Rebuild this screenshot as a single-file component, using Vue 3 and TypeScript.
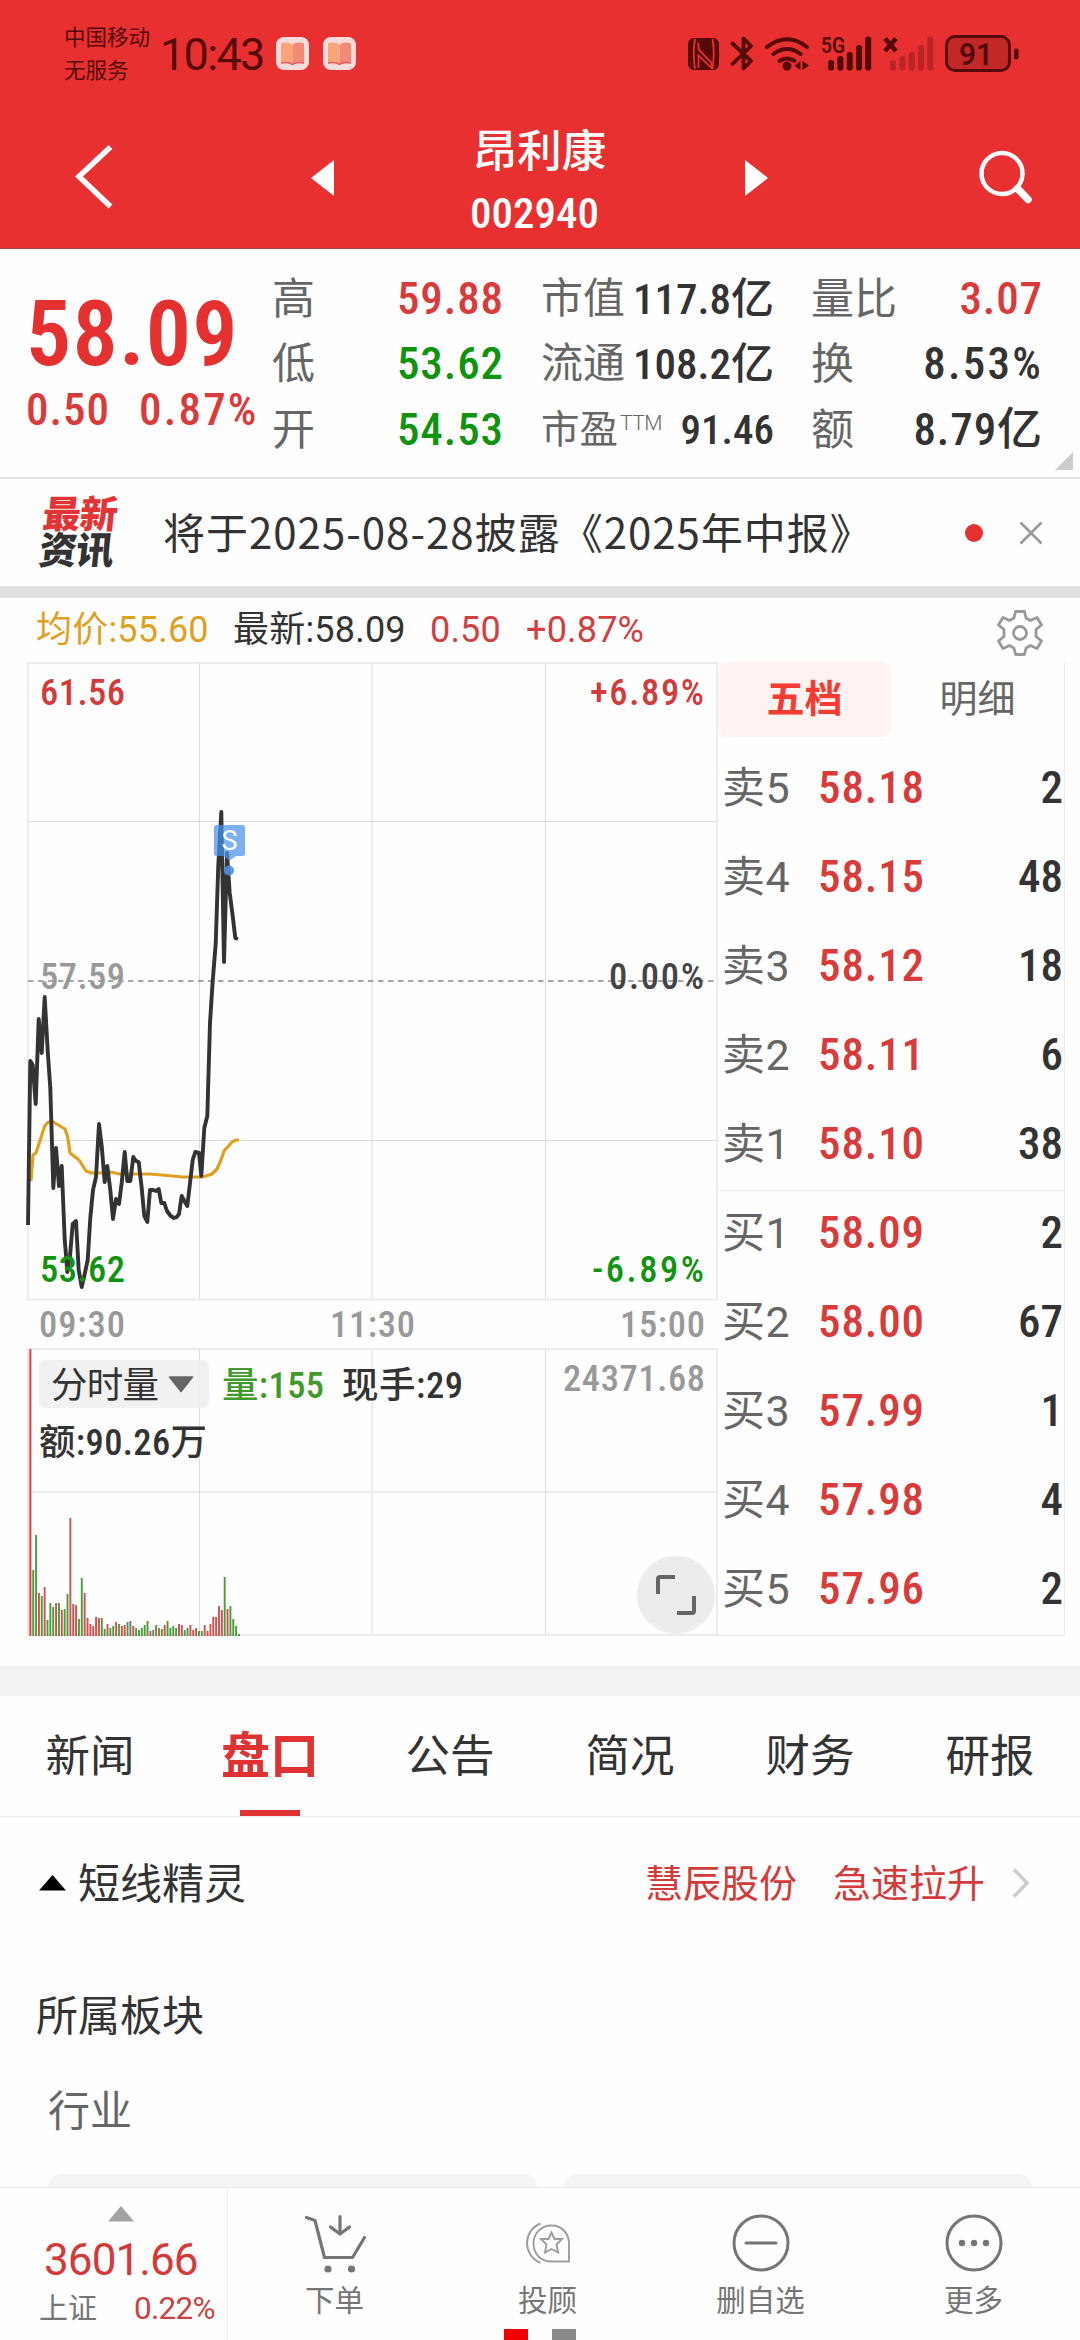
<script setup lang="ts">
type Tone = 'up' | 'down' | 'plain'

interface Stat {
  label: string
  sup?: string
  value: string
  tone: Tone
}

const statColumns: { key: string; items: Stat[] }[] = [
  {
    key: 'range',
    items: [
      { label: '高', value: '59.88', tone: 'up' },
      { label: '低', value: '53.62', tone: 'down' },
      { label: '开', value: '54.53', tone: 'down' },
    ],
  },
  {
    key: 'cap',
    items: [
      { label: '市值', value: '117.8亿', tone: 'plain' },
      { label: '流通', value: '108.2亿', tone: 'plain' },
      { label: '市盈', sup: 'TTM', value: '91.46', tone: 'plain' },
    ],
  },
  {
    key: 'turn',
    items: [
      { label: '量比', value: '3.07', tone: 'up' },
      { label: '换', value: '8.53%', tone: 'plain' },
      { label: '额', value: '8.79亿', tone: 'plain' },
    ],
  },
]

const orders = [
  { label: '卖5', price: '58.18', qty: 2 },
  { label: '卖4', price: '58.15', qty: 48 },
  { label: '卖3', price: '58.12', qty: 18 },
  { label: '卖2', price: '58.11', qty: 6 },
  { label: '卖1', price: '58.10', qty: 38 },
  { label: '买1', price: '58.09', qty: 2 },
  { label: '买2', price: '58.00', qty: 67 },
  { label: '买3', price: '57.99', qty: 1 },
  { label: '买4', price: '57.98', qty: 4 },
  { label: '买5', price: '57.96', qty: 2 },
]

const tabs = ['新闻', '盘口', '公告', '简况', '财务', '研报']
const activeTab = '盘口'

const pricePoints =
  '28,1225 30.3,1061 32.7,1065 35.7,1104 38.7,1019 41.7,1053 44.7,997 47.7,1051 50.3,1088 53.3,1188 56,1148 59,1186 61.7,1166 64.7,1239 67.3,1272 70,1256 72.7,1224 76,1221 78.7,1270 81.7,1287 84.7,1274 87.7,1260 90.3,1218 93,1190 96,1177 99,1124 101.7,1146 104.7,1182 107.3,1166 110.3,1190 113,1219 116,1199 119,1204 121.7,1183 124.7,1152 127.3,1181 130.3,1181 133.3,1157 136,1161 138.7,1162 141.7,1188 144.3,1216 147.3,1222 150,1190 153.3,1190 156,1191 158.7,1189 161.3,1203 164.3,1203 167,1211 170.7,1216 174,1218 176.7,1217 179,1214 181.7,1196 184.3,1201 187.3,1206 190,1183 192.7,1160 195.3,1152 199,1153 201.3,1176 204.3,1128 207.3,1116 210,1023 212.7,981 215.7,944 218.3,865 221.3,812 224,962 227,853 229.7,893 232.7,916 235.3,938 238,939'

const averagePoints =
  '31,1181 33,1155 36,1153 44.7,1126 48.3,1122 53.3,1122 65,1129 67.7,1137 70,1153 79,1160 86,1171 91.7,1173 100,1173 110,1172 120,1174 150,1174 173,1176 182,1177 203,1177 212,1174 217,1169 221,1160 224,1151 232,1142 236,1140 239,1140'

// One entry per minute: r = rising, g = falling, k = unchanged, then the bar height
const volumeSource =
  'r287 g66 g101 r43 g40 r49 g16 g33 g29 r33 g33 r26 g27 g42 r118 r32 r31 g17 g58 r43 r18 r12 r10 r19 r18 g18 g7 r12 g8 g10 r14 g12 r10 r11 g14 k15 r10 g8 g6 g8 g11 g15 r5 k6 g11 r8 g7 r11 g15 g8 g10 g8 r12 r11 g6 g8 r11 r6 r8 g5 g5 r11 r5 r12 r19 r19 r30 r26 g59 r27 g30 g17 g10 g2'

const barColors: Record<string, string> = { r: '#cf5150', g: '#4b9c3b', k: '#777777' }

const volumeBars = volumeSource.split(' ').map((entry, i) => {
  const height = Number(entry.slice(1))
  return { x: 29.4 + i * 2.858, y: 1636 - height, height, color: barColors[entry[0]] }
})

const signalBars = [
  { x: 828, y: 60 },
  { x: 837.4, y: 56 },
  { x: 846.8, y: 52 },
  { x: 856, y: 45 },
  { x: 865.2, y: 36.5 },
]
</script>

<template>
  <div class="screen">
    <header class="top">
      <div class="status">
        <div class="carrier"><span>中国移动</span><span>无服务</span></div>
        <span class="clock">10:43</span>
        <svg v-for="n in 2" :key="n" class="book" width="33" height="33" viewBox="0 0 33 33">
          <rect width="33" height="33" rx="8" fill="#f7dcdc" />
          <path d="M5 6.5C9 5 14 5 16.500 8V27.500C14 25.500 9 25.500 5 26.500Z" fill="#f9a57a" />
          <path d="M28 6.500C24 5 19 5 16.500 8V27.500C19 25.500 24 25.500 28 26.500Z" fill="#f28a76" />
          <path d="M5 26Q13 24.500 16.500 27.500Q20 24.500 28 26" fill="none" stroke="#ea5563" stroke-width="1.500" />
        </svg>
        <svg class="status-icons" width="340" height="44" viewBox="684 32 340 44">
          <g fill="#560909">
            <rect x="688" y="38" width="31" height="32" rx="6" />
            <path d="M695 39C693.500 48 693.500 60 695 69M712.500 39C714 48 714 60 712.500 69" fill="none" stroke="#e83030" stroke-width="1.800" />
            <path d="M695.500 40.500L711.500 57M699.500 51L710 61.500V69M697.500 50V66L712 69" fill="none" stroke="#e83030" stroke-width="0" />
            <path d="M698 43L699 50L711.500 62.500V68L698.500 55.500V68" fill="none" stroke="#e83030" stroke-width="1.800" />
            <path d="M732.500 43.500L751 61L743.500 68.500V38.500L751 46L732.500 64" fill="none" stroke="#560909" stroke-width="3.800" stroke-linejoin="round" stroke-linecap="round" />
            <path d="M767 47Q787 31.500 807 47M773.500 54Q787 44 800.500 54M779.500 61Q787 56 794.500 61" fill="none" stroke="#560909" stroke-width="4" stroke-linecap="round" />
            <circle cx="787" cy="66" r="4.500" />
            <path d="M794.500 66L800.500 61V70ZM809 65.500L802.500 61V70Z" />
            <text x="821" y="53" class="net" textLength="24" lengthAdjust="spacingAndGlyphs">5G</text>
            <rect v-for="bar in signalBars" :key="bar.x" :x="bar.x" :y="bar.y" width="6" :height="70.500 - bar.y" rx="2.800" />
            <path d="M885 38.500L896 51M896 38.500L885 51" stroke="#560909" stroke-width="4.500" />
            <g opacity="0.3">
              <rect v-for="bar in signalBars" :key="bar.x" :x="bar.x + 62" :y="bar.y" width="6" :height="70.500 - bar.y" rx="2.800" />
            </g>
            <rect x="946.500" y="36.500" width="63" height="34" rx="8.500" fill="#c32828" stroke="#560909" stroke-width="3" />
            <rect x="1014" y="48.500" width="4.500" height="11" rx="2" />
            <text x="959" y="65" class="battery" textLength="34" lengthAdjust="spacingAndGlyphs">91</text>
          </g>
        </svg>
      </div>
      <div class="nav">
        <svg width="60" height="80" viewBox="60 134 60 80"><path d="M110.500 145L79 174.500L110.500 204.500" fill="none" stroke="#fff" stroke-width="5.500" /></svg>
        <svg class="prev" width="23" height="36" viewBox="0 0 23 36"><path d="M0 18L23 0V36Z" fill="#fff" /></svg>
        <div class="title"><strong>昂利康</strong><span>002940</span></div>
        <svg class="next" width="23" height="36" viewBox="0 0 23 36"><path d="M23 18L0 0V36Z" fill="#fff" /></svg>
        <svg width="60" height="60" viewBox="974 146 60 60">
          <circle cx="1002" cy="173.500" r="20.500" fill="none" stroke="#fff" stroke-width="4.500" />
          <path d="M1017.500 188.500L1028 199.500" stroke="#fff" stroke-width="7.500" stroke-linecap="round" />
        </svg>
      </div>
    </header>

    <section class="quote">
      <div class="main-price">
        <div class="price">58.09</div>
        <div class="change"><span>0.50</span><span class="rate">0.87%</span></div>
      </div>
      <div v-for="col in statColumns" :key="col.key" class="stats" :class="col.key">
        <div v-for="item in col.items" :key="item.label" class="stat">
          <span class="label" :class="{ tight: item.sup }">{{ item.label }}<sup v-if="item.sup">{{ item.sup }}</sup></span>
          <span class="value" :class="[item.tone, { small: item.sup, rate: item.value.endsWith('%') }]">{{ item.value }}</span>
        </div>
      </div>
      <svg class="corner" width="18" height="18" viewBox="0 0 18 18"><path d="M18 0V18H0Z" fill="#ccc" /></svg>
    </section>

    <section class="news">
      <div class="news-logo"><span>最新</span><span>资讯</span></div>
      <p>将于2025-08-28披露《2025年中报》</p>
      <i class="dot"></i>
      <svg width="24" height="24" viewBox="0 0 24 24"><path d="M1.500 1.500L22.500 22.500M22.500 1.500L1.500 22.500" stroke="#999" stroke-width="2.600" /></svg>
    </section>

    <section class="info">
      <span class="avg">均价:55.60</span>
      <span class="last">最新:58.09</span>
      <span class="diff">0.50</span>
      <span class="pct">+0.87%</span>
      <svg width="48" height="48" viewBox="-24 -24 48 48" fill="none" stroke="#999" stroke-width="2.800" stroke-linejoin="round">
        <path d="M-4.500 -21.500H4.500L6 -15L10.500 -12.500L17 -15.500L21.500 -8L16 -3.500V3.500L21.500 8L17 15.500L10.500 12.500L6 15L4.500 21.500H-4.500L-6 15L-10.500 12.500L-17 15.500L-21.500 8L-16 3.500V-3.500L-21.500 -8L-17 -15.500L-10.500 -12.500L-6 -15Z" />
        <circle r="6.500" />
      </svg>
    </section>

    <section class="market">
      <svg class="chart" width="718" height="975" viewBox="0 662 718 975">
        <g fill="none" stroke="#ececec" stroke-width="2">
          <rect x="28" y="663" width="689" height="636.500" />
          <rect x="28" y="1349" width="689" height="286" />
          <path d="M372 663V1299M372 1349V1635M28 1492H717" />
        </g>
        <path d="M199.500 663V1299M545.500 663V1299M199.500 1349V1635M545.500 1349V1635M28 821.500H717M28 1140.500H717" stroke="#dcdcdc" stroke-width="1" />
        <path d="M28 981H717" stroke="#8c8c8c" stroke-width="1.500" stroke-dasharray="5.500 4.500" />

        <polyline :points="averagePoints" fill="none" stroke="#dfa01f" stroke-width="3.200" stroke-linejoin="round" />
        <polyline :points="pricePoints" fill="none" stroke="#333" stroke-width="3.900" stroke-linejoin="round" />
        <g>
          <rect x="214" y="825" width="31" height="31" rx="2.500" fill="#4a92ea" opacity="0.720" />
          <path d="M223 856H236L229.500 860.500Z" fill="#4a92ea" opacity="0.720" />
          <circle cx="229" cy="870.500" r="5" fill="#4a8fe6" opacity="0.900" />
          <text x="229.500" y="850" class="marker" text-anchor="middle">S</text>
        </g>

        <g class="scale">
          <text x="40" y="705" fill="#d33b3b" textLength="85">61.56</text>
          <text x="40" y="989" fill="#999" textLength="85">57.59</text>
          <text x="40" y="1282" fill="#109410" textLength="85">53.62</text>
          <text x="590" y="705" fill="#d33b3b" textLength="114">+6.89%</text>
          <text x="609" y="989" fill="#444" textLength="95">0.00%</text>
          <text x="592" y="1282" fill="#109410" textLength="112">-6.89%</text>
          <text x="39" y="1337" fill="#999" textLength="86">09:30</text>
          <text x="330" y="1337" fill="#999" textLength="85">11:30</text>
          <text x="620" y="1337" fill="#999" textLength="85">15:00</text>
        </g>

        <rect x="28" y="1349" width="4" height="287" fill="#f7d9d9" />
        <rect v-for="bar in volumeBars" :key="bar.x" :x="bar.x" :y="bar.y" width="1.900" :height="bar.height" :fill="bar.color" />

        <rect x="39" y="1360" width="170" height="48" rx="6" fill="#f0f0f0" fill-opacity="0.900" />
        <path d="M169.500 1377H192.500L181 1391.500Z" fill="#666" stroke="#666" stroke-width="1.500" stroke-linejoin="round" />
        <g class="scale" fill="#333">
          <text x="51" y="1398" class="kind" textLength="108">分时量</text>
          <text x="222" y="1398" fill="#3f9a2a" textLength="102">量:155</text>
          <text x="342" y="1398" textLength="121">现手:29</text>
          <text x="39" y="1455" textLength="168">额:90.26万</text>
          <text x="563" y="1391" fill="#999" textLength="142">24371.68</text>
        </g>

        <circle cx="676" cy="1595" r="39" fill="#ececec" />
        <path d="M675 1577H660Q658 1577 658 1579V1594M694 1596V1611Q694 1613 692 1613H677" fill="none" stroke="#666" stroke-width="4" />
      </svg>

      <div class="book-panel">
        <div class="book-tabs"><span class="on">五档</span><span>明细</span></div>
        <div class="rows">
          <div v-for="row in orders" :key="row.label" class="order">
            <span class="side">{{ row.label }}</span>
            <span class="at">{{ row.price }}</span>
            <span class="qty">{{ row.qty }}</span>
          </div>
        </div>
      </div>
    </section>

    <nav class="tabs">
      <span v-for="tab in tabs" :key="tab" :class="{ active: tab === activeTab }">{{ tab }}</span>
    </nav>

    <section class="sprite">
      <svg width="27" height="16" viewBox="0 0 27 16"><path d="M13.500 0L27 15.500H0Z" fill="#000" /></svg>
      <span class="name">短线精灵</span>
      <span class="hot">慧辰股份</span>
      <span class="hot">急速拉升</span>
      <svg class="more" width="18" height="32" viewBox="0 0 18 32"><path d="M2 2.500L15 16L2 29.500" fill="none" stroke="#ccc" stroke-width="3.500" /></svg>
    </section>

    <section class="sector">
      <h2>所属板块</h2>
      <h3>行业</h3>
      <div class="cards"><div class="card first"></div><div class="card"></div></div>
    </section>

    <footer class="bar">
      <div class="index">
        <svg width="26" height="16" viewBox="0 0 26 16"><path d="M13 0L26 15.500H0Z" fill="#a2a2a2" /></svg>
        <span class="points">3601.66</span>
        <div class="index-row"><span class="index-name">上证</span><span class="index-pct">0.22%</span></div>
      </div>
      <div class="action">
        <svg width="68" height="68" viewBox="300 2208 68 68" fill="none" stroke="#757575" stroke-width="3.200" stroke-linecap="round" stroke-linejoin="round">
          <path d="M305.500 2216.500L314 2219.500L323.500 2256.500H351.500L363.500 2236.500M339 2215.500V2233M329.500 2226L339 2233L348.500 2226" />
          <g fill="#757575" stroke="none"><circle cx="327" cy="2268" r="3.600" /><circle cx="350.500" cy="2268" r="3.600" /></g>
        </svg>
        <span>下单</span>
      </div>
      <div class="action">
        <svg width="68" height="68" viewBox="513.500 2208 68 68" fill="none" stroke="#9c9c9c" stroke-width="1.900">
          <path d="M540 2222.500C522 2230 522 2254 540 2262" />
          <path d="M568.500 2260.500H551C539.500 2260.500 533 2252 533 2242.500S540 2224.500 551 2224.500S568.500 2233 568.500 2243Z" />
          <path d="M551 2231.500L554 2238H561.500L556 2243.500L557.500 2251.500L551 2248L544.500 2251.500L546 2243.500L540.500 2238H548Z" />
        </svg>
        <span>投顾</span>
      </div>
      <div class="action">
        <svg width="68" height="68" viewBox="-34 -34 68 68" fill="none" stroke="#757575" stroke-width="3">
          <circle r="27" /><path d="M-15 0H15" stroke-linecap="round" />
        </svg>
        <span>删自选</span>
      </div>
      <div class="action">
        <svg width="68" height="68" viewBox="-34 -34 68 68" fill="none" stroke="#757575" stroke-width="3">
          <circle r="27" />
          <g fill="#757575" stroke="none"><circle cx="-12" r="3.200" /><circle r="3.200" /><circle cx="12" r="3.200" /></g>
        </svg>
        <span>更多</span>
      </div>
      <div class="pager"><i></i><i></i></div>
    </footer>
  </div>
</template>

<style>
body {
  margin: 0;
  background: #fefefe;
}
</style>

<style scoped>
.screen {
  width: 1080px;
  height: 2340px;
  overflow: hidden;
  display: flex;
  flex-direction: column;
  background: #fefefe;
  color: #333;
  font-family: Roboto, 'Noto Sans CJK SC', sans-serif;
}
.screen > * {
  flex: none;
  box-sizing: border-box;
}
svg {
  display: block;
  flex: none;
}
.title span,
.price,
.change,
.value,
.at,
.qty,
.scale {
  font-family: 'Roboto Condensed', Roboto, 'Noto Sans CJK SC', sans-serif;
}

.top {
  height: 249px;
  background: #e83030;
  border-bottom: 1px solid #b04a4a;
}
.status {
  height: 104px;
  display: flex;
  align-items: flex-start;
  color: #560909;
}
.carrier {
  width: 96px;
  padding: 21px 0 0 64px;
  display: flex;
  flex-direction: column;
  font-size: 21.500px;
  line-height: 33px;
  white-space: nowrap;
}
.clock {
  width: 116px;
  padding-top: 28px;
  font-size: 45px;
  line-height: 53px;
  font-weight: 400;
  letter-spacing: -1.700px;
}
.book {
  margin: 37px 14px 0 0;
}
.status-icons {
  margin: 32px 0 0 314px;
}
.net {
  font-size: 22px;
  font-weight: 600;
}
.battery {
  font-size: 31px;
  font-weight: 600;
}
.nav {
  height: 144px;
  padding: 0 46px 0 60px;
  display: flex;
  align-items: center;
}
.prev {
  margin: 3px 0 0 191px;
}
.title {
  flex: 1;
  margin-top: 15px;
  display: flex;
  flex-direction: column;
  align-items: center;
  color: #fff;
}
.title strong {
  font-size: 44.500px;
  line-height: 58px;
  font-weight: 500;
}
.title span {
  margin-right: 10px;
  font-size: 43px;
  line-height: 64px;
  font-weight: 500;
}
.next {
  margin: 3px 206px 0 0;
}

.quote {
  height: 230px;
  display: flex;
  border-bottom: 2px solid #e2e2e2;
  position: relative;
}
.main-price {
  width: 272px;
  padding-left: 26px;
  box-sizing: border-box;
  color: #e53030;
  white-space: nowrap;
}
.price {
  margin-top: 37px;
  font-size: 90px;
  line-height: 98px;
  font-weight: 600;
  letter-spacing: 1.200px;
}
.change {
  display: flex;
  gap: 29px;
  font-size: 45px;
  line-height: 52px;
  font-weight: 500;
  letter-spacing: 1px;
  color: #d93a3a;
}
.change .rate {
  letter-spacing: 2.200px;
}
.stats {
  padding-top: 17px;
  display: flex;
  flex-direction: column;
}
.stat {
  height: 65.500px;
  display: flex;
  align-items: center;
  justify-content: space-between;
  line-height: 60px;
}
.range {
  width: 232px;
}
.cap {
  width: 233px;
  margin-left: 37px;
}
.turn {
  width: 232px;
  margin-left: 37px;
}
.label {
  font-size: 43px;
  color: #666;
  white-space: nowrap;
}
.cap .label {
  font-size: 42px;
}
.cap .label.tight {
  font-size: 38.500px;
}
sup {
  margin-left: 2px;
  font-size: 21px;
  line-height: 20px;
  vertical-align: 13px;
  font-weight: 300;
  letter-spacing: -0.500px;
}
.value {
  font-size: 45px;
  font-weight: 500;
  letter-spacing: 0.900px;
  white-space: nowrap;
}
.value.rate {
  letter-spacing: 2.200px;
}
.cap .value {
  font-size: 43px;
  letter-spacing: 0;
}
.cap .value.small {
  font-size: 41px;
}
.up {
  color: #d93a3a;
}
.down {
  color: #109410;
}
.corner {
  position: absolute;
  right: 7px;
  bottom: 7px;
}

.news {
  height: 107px;
  padding: 0 37px 0 41px;
  display: flex;
  align-items: center;
}
.news-logo {
  width: 122px;
  display: flex;
  flex-direction: column;
  font-size: 38px;
  line-height: 36px;
  font-weight: 900;
  letter-spacing: -1px;
  color: #333;
  transform: skewX(-6deg);
}
.news-logo span:first-child {
  color: #e23434;
}
.news p {
  flex: 1;
  margin: -4px 0 0;
  font-family: 'Noto Sans CJK SC', sans-serif;
  font-size: 42px;
  line-height: 60px;
  letter-spacing: 1px;
  white-space: nowrap;
}
.dot {
  width: 18px;
  height: 18px;
  border-radius: 50%;
  background: #e53030;
  margin-right: 36px;
}

.info {
  height: 76px;
  padding: 0 36px;
  display: flex;
  align-items: center;
  border-top: 12px solid #e0e0e0;
  font-size: 36px;
  line-height: 50px;
  letter-spacing: 0.200px;
  white-space: nowrap;
}
.info .avg {
  width: 197px;
  color: #dfa01f;
}
.info .last {
  width: 197px;
}
.info .diff {
  width: 96px;
  color: #d04040;
}
.info .pct {
  flex: 1;
  color: #d04040;
}
.info svg {
  margin-top: 5px;
}

.market {
  height: 1004px;
  display: flex;
}
.scale {
  font-size: 36.500px;
  font-weight: 500;
}
.kind {
  font-weight: 400;
}
.marker {
  font-size: 27px;
  fill: #fff;
}
.book-panel {
  width: 347px;
  height: 974px;
  box-sizing: border-box;
  border-right: 1px solid #ececec;
  border-bottom: 1px solid #ececec;
}
.book-tabs {
  height: 81px;
  display: flex;
}
.book-tabs span {
  width: 173px;
  height: 75px;
  text-align: center;
  font-size: 38px;
  line-height: 75px;
  color: #666;
}
.book-tabs .on {
  border-radius: 9px;
  background: #fff3f2;
  color: #f63c32;
  font-weight: 700;
}
.order {
  height: 89px;
  padding: 0 1px 0 4px;
  display: flex;
  align-items: center;
  box-sizing: border-box;
  line-height: 60px;
}
.order:nth-child(6) {
  background: linear-gradient(#ececec, #ececec) 0 2px / 100% 1px no-repeat;
}
.side {
  width: 96px;
  font-size: 43px;
  letter-spacing: 0.500px;
  color: #666;
}
.at {
  flex: 1;
  font-size: 45px;
  font-weight: 500;
  letter-spacing: 0.900px;
  color: #d93a3a;
}
.qty {
  font-size: 45px;
  font-weight: 500;
}

.tabs {
  height: 151px;
  display: flex;
  border-top: 30px solid #f2f2f2;
  border-bottom: 1px solid #ebebeb;
}
.tabs span {
  width: 180px;
  height: 120px;
  text-align: center;
  font-size: 44.500px;
  line-height: 122px;
}
.tabs .active {
  font-size: 49px;
  font-weight: 700;
  color: #e03232;
  background: linear-gradient(#e03232, #e03232) center bottom / 60px 6px no-repeat;
}

.sprite {
  height: 132px;
  padding: 0 50px 0 39px;
  display: flex;
  align-items: center;
}
.sprite .name {
  flex: 1;
  margin: -6px 0 0 12px;
  font-size: 42px;
}
.hot {
  margin: -5px 36px 0 0;
  font-size: 38px;
  color: #d33a3a;
}
.sprite .more {
  margin-left: -9px;
}

.sector {
  height: 238px;
}
h2,
h3 {
  margin: 0;
  font-size: 42px;
  font-weight: 400;
}
h2 {
  padding: 33px 0 0 36px;
  line-height: 70px;
}
h3 {
  padding: 25px 0 0 48px;
  line-height: 70px;
  color: #666;
}
.cards {
  display: flex;
  gap: 27px;
  padding: 27px 48px 0;
}
.card {
  flex: 1;
  height: 13px;
  border-radius: 14px 14px 0 0;
  background: #f4f4f4;
}
.card.first {
  flex: 0 0 489px;
}

.bar {
  height: 153px;
  display: flex;
  border-top: 1px solid #ebebeb;
  position: relative;
  background: #fefefe;
}
.index {
  width: 228px;
  box-sizing: border-box;
  border-right: 1px solid #ebebeb;
  padding-top: 18px;
  display: flex;
  flex-direction: column;
}
.index svg {
  margin-left: 108px;
}
.points {
  margin: 11px 0 0 44px;
  font-size: 44px;
  line-height: 54px;
  letter-spacing: -0.900px;
  color: #d33a3a;
}
.index-row {
  display: flex;
  align-items: center;
  padding: 3px 0 0 39px;
  line-height: 38px;
}
.index-name {
  width: 95px;
  font-size: 29px;
  color: #757575;
}
.index-pct {
  font-size: 31.500px;
  letter-spacing: -0.700px;
  color: #c94343;
}
.action {
  width: 213px;
  display: flex;
  flex-direction: column;
  align-items: center;
  font-size: 29.500px;
  line-height: 40px;
  color: #757575;
}
.action svg {
  margin: 21px 0 4px;
}
.pager {
  position: absolute;
  left: 504px;
  bottom: 0;
  display: flex;
  gap: 24px;
}
.pager i {
  width: 24px;
  height: 11px;
  background: #f00000;
}
.pager i + i {
  background: #888;
}
</style>
